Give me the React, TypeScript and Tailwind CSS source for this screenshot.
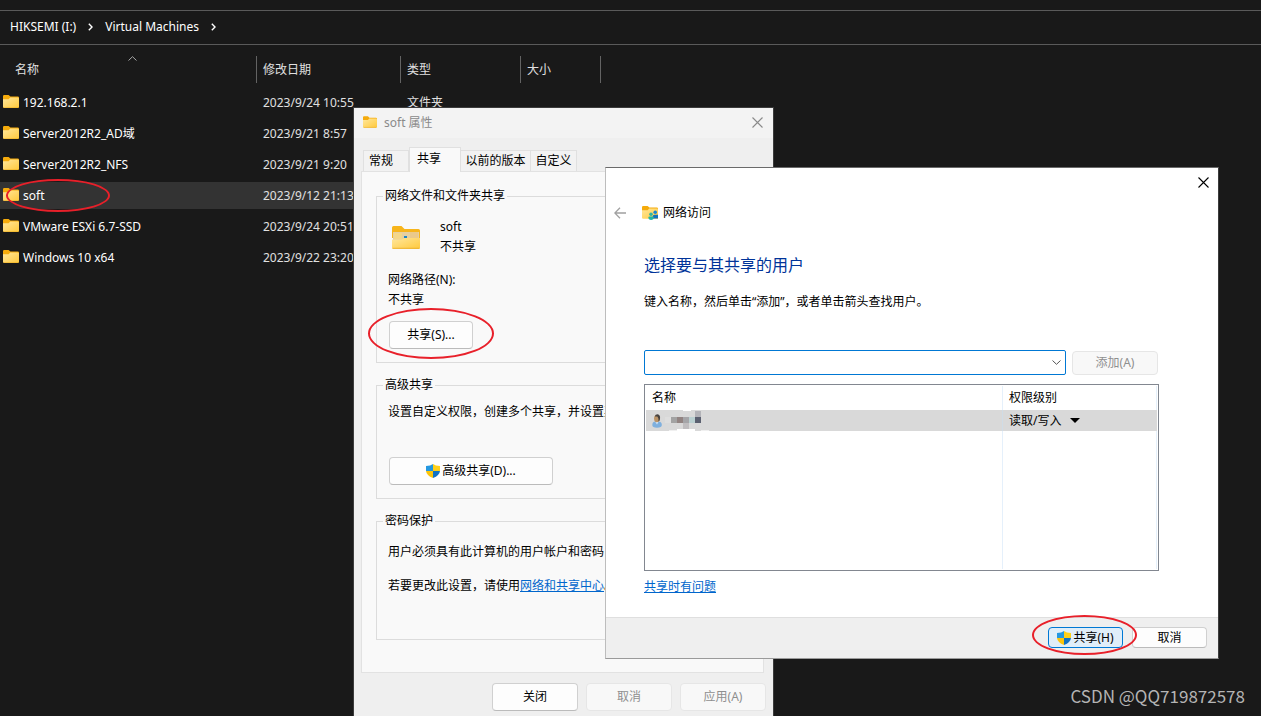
import React from "react";

type FileRow = { name: string; date: string; type?: string; selected?: boolean };

const files: FileRow[] = [
  { name: "192.168.2.1", date: "2023/9/24 10:55", type: "文件夹" },
  { name: "Server2012R2_AD域", date: "2023/9/21 8:57" },
  { name: "Server2012R2_NFS", date: "2023/9/21 9:20" },
  { name: "soft", date: "2023/9/12 21:13", selected: true },
  { name: "VMware ESXi 6.7-SSD", date: "2023/9/24 20:51" },
  { name: "Windows 10 x64", date: "2023/9/22 23:20" },
];

function FolderIcon({ className }: { className: string }) {
  return (
    <svg viewBox="0 0 16 13" className={className} aria-hidden="true">
      <defs>
        <linearGradient id="folder-front" x1="0" y1="0" x2="1" y2="1">
          <stop offset="0" stopColor="#ffe79c" />
          <stop offset="1" stopColor="#ffc93c" />
        </linearGradient>
      </defs>
      <path d="M0 1.2Q0 0 1.2 0H5.6L7.4 1.6H14.8Q16 1.6 16 2.8V6H0Z" fill="#f5ab0c" />
      <path d="M0 4.2H5.6L7.2 2.6H15Q16 2.6 16 3.6V11.8Q16 13 14.8 13H1.2Q0 13 0 11.8Z" fill="url(#folder-front)" />
      <path d="M.4 12.2Q.7 12.7 1.3 12.7H14.7Q15.3 12.7 15.6 12.2" stroke="#eba91b" strokeWidth=".6" fill="none" />
    </svg>
  );
}

function LargeFolderIcon() {
  return (
    <svg viewBox="0 0 28 23" className="h-[23px] w-7" aria-hidden="true">
      <path d="M0 1.5Q0 0 1.5 0H9.5L12.5 3H26.5Q28 3 28 4.5V12H0Z" fill="#f7b51c" />
      <path d="M1 6H27V14H1Z" fill="#e6cfa0" />
      <path d="M2 7H10V13H2Z" fill="#f4d789" />
      <path d="M18 6H26V12H18Z" fill="#eac98b" />
      <path d="M0 13.5H9.5L12.5 12H28V21.5Q28 23 26.5 23H1.5Q0 23 0 21.5Z" fill="url(#folder-front)" />
      <path d="M12 10H15V12H12Z" fill="#1d86c8" />
      <path d="M.5 22.3H27.5" stroke="#e7ac2b" strokeWidth=".8" />
    </svg>
  );
}

function NetworkFolderIcon() {
  return (
    <svg viewBox="0 0 16 14" className="h-[14px] w-4" aria-hidden="true">
      <path d="M0 1.2Q0 0 1.2 0H5.6L7.4 1.6H14.8Q16 1.6 16 2.8V6H0Z" fill="#f5ab0c" />
      <path d="M0 4.2H5.6L7.2 2.6H15Q16 2.6 16 3.6V12.8H1.2Q0 12.8 0 11.8Z" fill="url(#folder-front)" />
      <circle cx="13.2" cy="6.2" r="1.8" fill="#1787d4" />
      <path d="M10.8 12.4V10.4Q10.8 8.8 12.4 8.8H16V12.4Z" fill="#1272bd" />
      <circle cx="9" cy="8.2" r="1.8" fill="#31b6a2" />
      <path d="M6.4 11.6Q6.4 10.6 7.4 10.6H10.8Q11.8 10.6 11.8 11.6Q11.8 14 9.1 14Q6.4 14 6.4 11.6Z" fill="#22b5a6" />
    </svg>
  );
}

function ShieldIcon() {
  return (
    <svg viewBox="0 0 14 14" className="h-[14px] w-[14px] shrink-0" aria-hidden="true">
      <path d="M7 0Q4.6 1.9 0 2V7H7Z" fill="#2598e0" />
      <path d="M7 0Q9.4 1.9 14 2V7H7Z" fill="#ffd01a" />
      <path d="M0 7Q.5 11.6 7 14V7Z" fill="#fcc40a" />
      <path d="M14 7Q13.5 11.6 7 14V7Z" fill="#1172c4" />
    </svg>
  );
}

function UserIcon() {
  return (
    <svg viewBox="0 0 10 14" className="h-[14px] w-[10px] shrink-0" aria-hidden="true">
      <path d="M.3 11Q.3 7.6 3.2 7.4H6.6Q9.8 7.6 9.8 11Q9.8 13.7 5 13.7Q.3 13.7 .3 11Z" fill="#7fb0de" />
      <path d="M3.4 8L5 10.6L6.4 8Z" fill="#d7e7f5" />
      <ellipse cx="4.8" cy="4.6" rx="2.8" ry="3.7" fill="#bb9468" />
      <path d="M2.8 2.4Q3.2 .3 5.6 .3Q8.6 .8 8 5Q7.6 7 6.6 7.6Q6.8 4 5.4 2.6Z" fill="#47423f" />
    </svg>
  );
}

function Mosaic() {
  return (
    <svg viewBox="0 0 44 21" className="h-[21px] w-11" aria-hidden="true">
      <rect x="18" y="0" width="8" height="1" fill="#fff" />
      <rect x="0" y="7" width="6" height="6" fill="#dedede" />
      <rect x="6" y="7" width="6" height="6" fill="#a3a3a3" />
      <rect x="12" y="7" width="6" height="6" fill="#928482" />
      <rect x="18" y="7" width="6" height="6" fill="#a5a5a8" />
      <rect x="24" y="7" width="6" height="6" fill="#b9cfd0" />
      <rect x="30" y="7" width="6" height="6" fill="#5b6070" />
      <rect x="30" y="1" width="6" height="6" fill="#b3b3b8" />
      <rect x="18" y="13" width="6" height="6" fill="#bfbdbf" />
      <rect x="12" y="19" width="18" height="2" fill="#fff" />
      <rect x="4" y="20" width="8" height="1" fill="#f0f0f0" />
      <rect x="36" y="20" width="8" height="1" fill="#f0f0f0" />
    </svg>
  );
}

function CloseIcon({ className }: { className: string }) {
  return (
    <svg viewBox="0 0 11 11" className={className} aria-hidden="true">
      <path d="M.5 .5L10.5 10.5M10.5 .5L.5 10.5" stroke="currentColor" strokeWidth="1.1" fill="none" />
    </svg>
  );
}

function CrumbArrow() {
  return (
    <svg viewBox="0 0 5 8" className="h-2 w-[5px]" aria-hidden="true">
      <path d="M.8 .8L4 4L.8 7.2" stroke="#fff" strokeWidth="1.4" fill="none" />
    </svg>
  );
}

function Ring({ className }: { className: string }) {
  return (
    <div
      aria-hidden="true"
      className={"pointer-events-none absolute rounded-[50%] border-2 border-[#e8202a] " + className}
    />
  );
}

function Group({ title, className, children }: { title: string; className: string; children: React.ReactNode }) {
  return (
    <fieldset className={"border border-[#dcdcdc] pl-[11px] " + className}>
      <legend className="-ml-[5px] px-[2px] leading-4">{title}</legend>
      {children}
    </fieldset>
  );
}

const plainButton =
  "flex items-center justify-center rounded border border-[#d0d0d0] border-b-[#bbbbbb] bg-[#fdfdfd] leading-4";
const disabledButton =
  "flex items-center justify-center rounded border border-[#e6e6e6] bg-[#f8f8f8] leading-4 text-[#8f8f8f]";

function Explorer() {
  return (
    <main className="text-[#e0e0e0]">
      <div className="h-[10px]" />
      <nav className="flex h-[35px] items-center gap-3 border-y border-[#5a5a5a] pb-px pl-[10px] text-white">
        <a href="#drive">HIKSEMI (I:)</a>
        <CrumbArrow />
        <a href="#vm">Virtual Machines</a>
        <CrumbArrow />
      </nav>
      <table className="mt-[7px] w-[601px] table-fixed border-separate border-spacing-x-0 border-spacing-y-1 text-left">
        <colgroup>
          <col className="w-[257px]" />
          <col className="w-[144px]" />
          <col className="w-[120px]" />
          <col className="w-[80px]" />
        </colgroup>
        <thead>
          <tr className="h-[29px] align-top">
            <th className="p-0 font-normal">
              <div className="relative flex h-[27px] items-center border-r border-[#636363] pl-[15px]">
                名称
                <svg viewBox="0 0 9 5" className="absolute top-0 left-32 h-[5px] w-[9px]" aria-hidden="true">
                  <path d="M.5 4.5L4.5 .7L8.5 4.5" stroke="#a8a8a8" fill="none" />
                </svg>
              </div>
            </th>
            {["修改日期", "类型", "大小"].map((title) => (
              <th key={title} className="p-0 font-normal">
                <div className="flex h-[27px] items-center border-r border-[#636363] pl-[6px]">{title}</div>
              </th>
            ))}
          </tr>
        </thead>
        <tbody>
          {files.map((file) => (
            <tr key={file.name} className={file.selected ? "h-[27px] bg-[#333333]" : "h-[27px]"}>
              <td className="p-0 pl-[3px]">
                <div className="flex items-center gap-1 text-white">
                  <FolderIcon className="mb-[2px] h-[13px] w-4" />
                  {file.name}
                </div>
              </td>
              <td className="p-0 pl-[6px]">{file.date}</td>
              <td className="p-0 pl-[6px]">{file.type}</td>
              <td className="p-0" />
            </tr>
          ))}
        </tbody>
      </table>
    </main>
  );
}

function PropertiesDialog() {
  return (
    <section
      aria-label="soft 属性"
      className="absolute top-[107px] left-[353px] w-[421px] border border-[#3c3c3c] bg-[#efefef] pb-2 text-black"
    >
      <header className="flex h-[30px] items-center bg-[#f3f3f3] pr-[10px] pl-[9px] text-[#8a8a8a]">
        <FolderIcon className="mb-[2px] h-3 w-[14px]" />
        <h2 className="ml-[7px] flex-1">soft 属性</h2>
        <button type="button" aria-label="关闭窗口" className="mb-[2px]">
          <CloseIcon className="h-[11px] w-[11px]" />
        </button>
      </header>
      <div className="px-[7px]">
        <div role="tablist" className="flex h-[33px] items-end pl-[2px]">
          <button type="button" role="tab" className="h-[21px] w-[46px] border border-b-0 border-[#e0e0e0] bg-[#f2f2f2] pr-[10px]">
            常规
          </button>
          <button
            type="button"
            role="tab"
            aria-selected="true"
            className="relative -mb-px h-[25px] w-[52px] border border-b-0 border-[#e0e0e0] bg-[#f9f9f9] pr-3 pb-[3px]"
          >
            共享
          </button>
          <button type="button" role="tab" className="h-[21px] w-[70px] border-t border-r border-[#e0e0e0] bg-[#f2f2f2]">
            以前的版本
          </button>
          <button type="button" role="tab" className="h-[21px] w-[46px] border-t border-r border-[#e0e0e0] bg-[#f2f2f2]">
            自定义
          </button>
        </div>
        <div className="mr-[2px] border border-[#e2e2e2] bg-[#f9f9f9] px-[14px] pt-4 pb-8 leading-5 whitespace-nowrap">
          <Group title="网络文件和文件夹共享" className="mb-[14px] pt-[13px] pb-[13px]">
            <div className="flex items-center gap-5 pl-1">
              <LargeFolderIcon />
              <div>
                <p>soft</p>
                <p>不共享</p>
              </div>
            </div>
            <p className="mt-[13px]">网络路径(N):</p>
            <p>不共享</p>
            <button type="button" className={plainButton + " mt-[11px] ml-px h-7 w-[84px]"}>
              共享(S)...
            </button>
          </Group>
          <Group title="高级共享" className="mb-[14px] pt-[9px] pb-[13px]">
            <p>设置自定义权限，创建多个共享，并设置其</p>
            <button type="button" className={plainButton + " mt-[35px] ml-px h-7 w-[164px] gap-[2px]"}>
              <ShieldIcon />
              高级共享(D)...
            </button>
          </Group>
          <Group title="密码保护" className="pt-[13px] pb-[43px]">
            <p>用户必须具有此计算机的用户帐户和密码</p>
            <p className="mt-[14px]">
              若要更改此设置，请使用
              <a href="#sharing-center" className="text-[#0066cc] underline">
                网络和共享中心
              </a>
              。
            </p>
          </Group>
        </div>
        <footer className="mt-[10px] flex justify-end gap-2">
          <button type="button" className={plainButton + " h-7 w-[86px]"}>
            关闭
          </button>
          <button type="button" disabled className={disabledButton + " h-7 w-[86px]"}>
            取消
          </button>
          <button type="button" disabled className={disabledButton + " h-7 w-[86px]"}>
            应用(A)
          </button>
        </footer>
      </div>
    </section>
  );
}

function NetworkAccessDialog() {
  return (
    <section
      aria-label="网络访问"
      className="absolute top-[167px] left-[605px] w-[614px] border border-[#bdbdbd] border-t-[#6a6a6a] border-r-[#3c3c3c] border-b-[#9a9a9a] bg-white text-black"
    >
      <header className="flex h-7 items-center justify-end pr-[9px]">
        <button type="button" aria-label="关闭窗口">
          <CloseIcon className="h-[11px] w-[11px]" />
        </button>
      </header>
      <div className="mt-[7px] flex h-5 items-center pl-2">
        <button type="button" aria-label="返回">
          <svg viewBox="0 0 12 12" className="h-3 w-3" aria-hidden="true">
            <path d="M12 6H.8M6 .8L.8 6L6 11.2" stroke="#a0a0a0" strokeWidth="1.3" fill="none" />
          </svg>
        </button>
        <div className="ml-4 flex items-center gap-[5px]">
          <NetworkFolderIcon />
          <span>网络访问</span>
        </div>
      </div>
      <div className="pr-[59px] pl-[38px]">
        <h2 className="mt-[30px] text-base leading-6 text-[#003399]">选择要与其共享的用户</h2>
        <p className="mt-[15px] leading-5">键入名称，然后单击“添加”，或者单击箭头查找用户。</p>
        <div className="mt-[38px] flex items-center gap-[6px] pr-px">
          <div className="flex h-[25px] flex-1 items-center rounded-[2px] border border-[#0078d4] bg-white">
            <input type="text" aria-label="用户名称" className="h-full min-w-0 flex-1 px-1 outline-none" />
            <button type="button" aria-label="查找用户" className="px-1">
              <svg viewBox="0 0 9 5" className="h-[5px] w-[9px]" aria-hidden="true">
                <path d="M.5 .5L4.5 4.3L8.5 .5" stroke="#555" fill="none" />
              </svg>
            </button>
          </div>
          <button type="button" disabled className={disabledButton + " h-6 w-[86px]"}>
            添加(A)
          </button>
        </div>
        <div className="mt-[9px] border border-[#828790] p-px">
          <table className="w-full table-fixed border-collapse text-left leading-4">
            <colgroup>
              <col />
              <col className="w-[154px]" />
            </colgroup>
            <thead>
              <tr className="h-6">
                <th className="border-r border-[#e5f0fb] p-0 pl-[6px] font-normal">名称</th>
                <th className="border-r border-[#e5f0fb] p-0 pl-[6px] font-normal">权限级别</th>
              </tr>
            </thead>
            <tbody>
              <tr className="h-[21px] bg-[#d9d9d9]">
                <td className="border-r border-[#d0dce6] p-0 pl-[6px]">
                  <div className="flex items-center gap-[3px]">
                    <UserIcon />
                    <Mosaic />
                  </div>
                </td>
                <td className="p-0 pl-[6px]">
                  <button type="button" className="flex items-center gap-[9px]">
                    读取/写入
                    <svg viewBox="0 0 10 5" className="h-[5px] w-[10px]" aria-hidden="true">
                      <path d="M0 0H10L5 5Z" fill="#000" />
                    </svg>
                  </button>
                </td>
              </tr>
              <tr className="h-[138px]">
                <td className="border-r border-[#e5f0fb] p-0" />
                <td className="border-r border-[#e5f0fb] p-0" />
              </tr>
            </tbody>
          </table>
        </div>
        <p className="mt-[6px] leading-5">
          <a href="#help" className="text-[#0066cc] underline">
            共享时有问题
          </a>
        </p>
      </div>
      <footer className="mt-5 flex justify-end gap-[9px] border-t border-[#dfdfdf] bg-[#efefef] pt-[9px] pr-[11px] pb-[10px]">
        <button
          type="button"
          className="flex h-[21px] w-[75px] items-center justify-center gap-[2px] rounded border border-[#0078d4] bg-[#e0eef9] leading-4"
        >
          <ShieldIcon />
          共享(H)
        </button>
        <button type="button" className={plainButton + " h-[21px] w-[75px]"}>
          取消
        </button>
      </footer>
    </section>
  );
}

export default function App() {
  return (
    <div className="relative min-h-screen overflow-hidden bg-[#191919] font-['Noto_Sans','Noto_Sans_CJK_SC',sans-serif] text-xs">
      <Explorer />
      <PropertiesDialog />
      <NetworkAccessDialog />
      <Ring className="top-[179px] left-[6px] h-[33px] w-[104px]" />
      <Ring className="top-[308px] left-[368px] h-[51px] w-[126px]" />
      <Ring className="top-[615px] left-[1032px] h-10 w-[105px]" />
      <p className="absolute right-4 bottom-2 font-['Noto_Sans_CJK_SC',sans-serif] text-[17px] leading-6 text-[#b4b4b4]">
        CSDN @QQ719872578
      </p>
    </div>
  );
}
